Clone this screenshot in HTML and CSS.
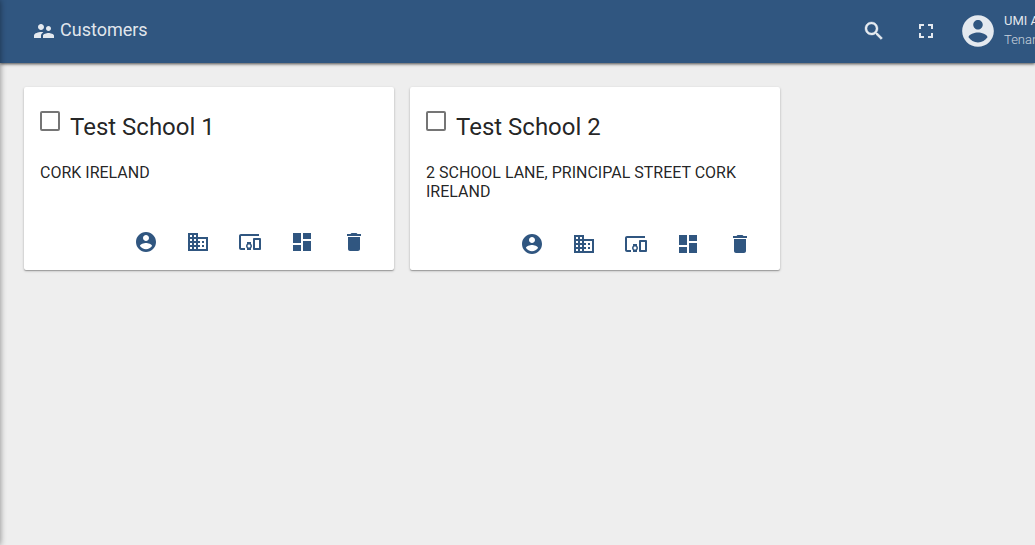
FILE: index.html
```html
<!DOCTYPE html>
<html lang="en">
<head>
<meta charset="utf-8">
<title>Customers</title>
<meta name="viewport" content="width=device-width, initial-scale=1">
<link rel="stylesheet" href="styles.css">
</head>
<body>
<svg class="sprite" aria-hidden="true">
  <symbol id="account" viewBox="0 0 24 24"><path d="M12 2C6.48 2 2 6.48 2 12s4.480 10 10 10 10-4.480 10-10S17.520 2 12 2zm0 3c1.660 0 3 1.340 3 3s-1.340 3-3 3-3-1.340-3-3 1.340-3 3-3zm0 14.200c-2.500 0-4.710-1.280-6-3.220.030-1.990 4-3.080 6-3.080 1.990 0 5.970 1.090 6 3.080-1.290 1.940-3.500 3.220-6 3.220z"/></symbol>
  <symbol id="domain" viewBox="0 0 24 24"><path d="M12 7V3H2v18h20V7H12zM6 19H4v-2h2v2zm0-4H4v-2h2v2zm0-4H4V9h2v2zm0-4H4V5h2v2zm4 12H8v-2h2v2zm0-4H8v-2h2v2zm0-4H8V9h2v2zm0-4H8V5h2v2zm10 12h-8v-2h2v-2h-2v-2h2v-2h-2V9h8v10zm-2-8h-2v2h2v-2zm0 4h-2v2h2v-2z"/></symbol>
  <symbol id="devices" viewBox="0 0 24 24"><path d="M3 6h18V4H3c-1.100 0-2 .9-2 2v12c0 1.100.9 2 2 2h4v-2H3V6zm10 6H9v1.780c-.61.550-1 1.330-1 2.220s.39 1.670 1 2.220V20h4v-1.780c.61-.55 1-1.340 1-2.220s-.39-1.670-1-2.220V12zm-2 5.500c-.83 0-1.500-.67-1.500-1.500s.67-1.500 1.500-1.500 1.500.67 1.500 1.500-.67 1.500-1.500 1.500zM22 8h-6c-.5 0-1 .5-1 1v10c0 .5.5 1 1 1h6c.5 0 1-.5 1-1V9c0-.5-.5-1-1-1zm-1 10h-4v-8h4v8z"/></symbol>
  <symbol id="dashboard" viewBox="0 0 24 24"><path d="M3 13h8V3H3v10zm0 8h8v-6H3v6zm10 0h8V11h-8v10zm0-18v6h8V3h-8z"/></symbol>
  <symbol id="delete" viewBox="0 0 24 24"><path d="M6 19c0 1.100.9 2 2 2h8c1.100 0 2-.9 2-2V7H6v12zM19 4h-3.500l-1-1h-5l-1 1H5v2h14V4z"/></symbol>
  <symbol id="people" viewBox="0 0 24 24"><path d="M16.500 12c1.380 0 2.490-1.120 2.490-2.500S17.880 7 16.500 7C15.120 7 14 8.120 14 9.500s1.120 2.500 2.500 2.500zM9 11c1.660 0 2.990-1.340 2.990-3S10.660 5 9 5C7.340 5 6 6.340 6 8s1.340 3 3 3zm7.500 3c-1.830 0-5.500.92-5.500 2.750V19h11v-2.250c0-1.830-3.670-2.750-5.500-2.750zM9 13c-2.330 0-7 1.170-7 3.500V19h7v-2.250c0-.85.330-2.340 2.370-3.470C10.500 13.100 9.660 13 9 13z"/></symbol>
  <symbol id="search" viewBox="0 0 24 24"><path d="M15.500 14h-.79l-.28-.27C15.410 12.590 16 11.110 16 9.500 16 5.910 13.090 3 9.500 3S3 5.910 3 9.500 5.910 16 9.500 16c1.610 0 3.090-.59 4.230-1.570l.27.28v.79l5 4.990L20.490 19l-4.990-5zm-6 0C7.010 14 5 11.990 5 9.500S7.010 5 9.500 5 14 7.010 14 9.500 11.990 14 9.500 14z" stroke="currentColor" stroke-width=".4"/></symbol>
  <symbol id="fullscreen" viewBox="0 0 24 24"><path d="M7 14H5v5h5v-2H7v-3zm-2-4h2V7h3V5H5v5zm12 7h-3v2h5v-5h-2v3zM14 5v2h3v3h2V5h-5z"/></symbol>
</svg>
<header class="toolbar">
  <h1 class="page-title"><svg class="icon"><use href="#people"/></svg><span class="page-name">Customers</span></h1>
  <div class="tools">
    <button class="icon-button" aria-label="Search"><svg class="icon"><use href="#search"/></svg></button>
    <button class="icon-button" aria-label="Fullscreen"><svg class="icon"><use href="#fullscreen"/></svg></button>
  </div>
  <div class="user">
    <svg class="avatar"><use href="#account"/></svg>
    <div class="user-info"><span class="user-name">UMI A</span><span class="user-role">Tenant</span></div>
  </div>
</header>
<main class="cards">
  <article class="card">
    <div class="card-head">
      <input class="check" type="checkbox" id="school-1">
      <label class="card-title" for="school-1">Test School 1</label>
    </div>
    <p class="address">CORK IRELAND</p>
    <div class="actions">
      <button class="icon-button" aria-label="Users"><svg class="icon"><use href="#account"/></svg></button>
      <button class="icon-button" aria-label="Assets"><svg class="icon"><use href="#domain"/></svg></button>
      <button class="icon-button" aria-label="Devices"><svg class="icon"><use href="#devices"/></svg></button>
      <button class="icon-button" aria-label="Dashboards"><svg class="icon"><use href="#dashboard"/></svg></button>
      <button class="icon-button" aria-label="Delete"><svg class="icon"><use href="#delete"/></svg></button>
    </div>
  </article>
  <article class="card">
    <div class="card-head">
      <input class="check" type="checkbox" id="school-2">
      <label class="card-title" for="school-2">Test School 2</label>
    </div>
    <p class="address">2 SCHOOL LANE, PRINCIPAL STREET CORK IRELAND</p>
    <div class="actions">
      <button class="icon-button" aria-label="Users"><svg class="icon"><use href="#account"/></svg></button>
      <button class="icon-button" aria-label="Assets"><svg class="icon"><use href="#domain"/></svg></button>
      <button class="icon-button" aria-label="Devices"><svg class="icon"><use href="#devices"/></svg></button>
      <button class="icon-button" aria-label="Dashboards"><svg class="icon"><use href="#dashboard"/></svg></button>
      <button class="icon-button" aria-label="Delete"><svg class="icon"><use href="#delete"/></svg></button>
    </div>
  </article>
</main>
</body>
</html>
```
FILE: styles.css
```css
* {
  box-sizing: border-box;
}

body {
  margin: 0;
  min-height: 100vh;
  overflow-x: hidden;
  background: #eee;
  color: rgba(0, 0, 0, 0.87);
  font-family: Roboto, "Liberation Sans", sans-serif;
}

/* shadow cast by the side navigation */
body::before {
  content: "";
  position: fixed;
  z-index: 2;
  top: 0;
  bottom: 0;
  left: -10px;
  width: 10px;
  box-shadow: 0 0 6px rgba(0, 0, 0, 0.45);
}

.sprite {
  display: none;
}

.toolbar {
  display: flex;
  align-items: center;
  padding: 11px 0 12px 32px;
  background: #305680;
  color: rgba(255, 255, 255, 0.87);
  box-shadow: 0 1px 3px rgba(0, 0, 0, 0.7);
}

.page-title {
  display: flex;
  flex: 1;
  align-items: center;
  gap: 4px;
  margin: 0;
  font-size: 18px;
  font-weight: 400;
  line-height: 24px;
}

.page-name {
  padding-bottom: 2px;
}

.icon {
  display: block;
  width: 24px;
  height: 24px;
  fill: currentColor;
}

.icon-button {
  display: grid;
  place-items: center;
  width: 40px;
  height: 40px;
  padding: 0;
  border: 0;
  border-radius: 50%;
  background: none;
  color: inherit;
  cursor: pointer;
}

.tools {
  display: flex;
  gap: 12px;
}

.user {
  display: flex;
  align-items: center;
  gap: 7px;
  padding-left: 13px;
}

.avatar {
  width: 38px;
  height: 38px;
  fill: currentColor;
}

.user-info {
  display: flex;
  flex-direction: column;
  width: 31px;
  padding-bottom: 2px;
  font-size: 13px;
  line-height: 19px;
  white-space: nowrap;
}

.user-role {
  color: rgba(255, 255, 255, 0.75);
  font-weight: 300;
}

.cards {
  display: grid;
  grid-template-columns: repeat(auto-fill, 370px);
  gap: 16px;
  padding: 24px;
}

.card {
  padding: 24px 16px 6px;
  border-radius: 2px;
  background: #fff;
  box-shadow: 0 1px 3px rgba(0, 0, 0, 0.2), 0 1px 1px rgba(0, 0, 0, 0.24);
}

.card-head {
  display: flex;
  align-items: flex-start;
  gap: 10px;
}

.check {
  appearance: none;
  width: 20px;
  height: 20px;
  margin: 0;
  border: 2px solid rgba(0, 0, 0, 0.54);
  border-radius: 2px;
}

.check:checked {
  background: #305680;
}

.card-title {
  font-size: 24px;
  line-height: 32px;
}

.address {
  min-height: 36px;
  margin: 20px 0 23px;
  font-size: 16px;
  line-height: 19px;
}

.actions {
  display: flex;
  justify-content: flex-end;
  gap: 12px;
  padding-right: 4px;
  color: #305680;
}
```
